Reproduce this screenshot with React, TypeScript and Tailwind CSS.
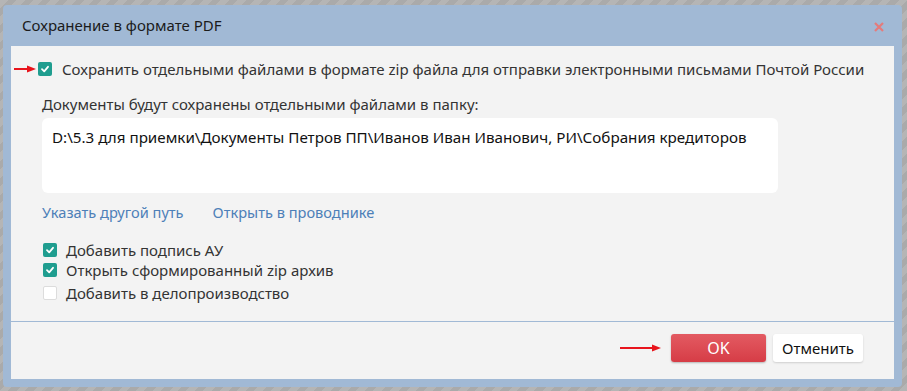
const font = { fontFamily: '"Noto Sans", "Open Sans", sans-serif' };

function Check({ checked }: { checked: boolean }) {
  return checked ? (
    <span className="flex h-[14px] w-[14px] shrink-0 items-center justify-center rounded-[2px] bg-[#1f9d8f]">
      <svg width="10" height="10" viewBox="0 0 10 10">
        <path d="M2 5.2 L4.2 7.3 L8 2.8" stroke="white" strokeWidth="1.8" fill="none" strokeLinecap="round" strokeLinejoin="round" />
      </svg>
    </span>
  ) : (
    <span className="h-[14px] w-[14px] shrink-0 rounded-[2px] border border-[#dcdcdc] bg-white" />
  );
}

function Arrow({ w }: { w: number }) {
  return (
    <svg width={w} height="8" viewBox={`0 0 ${w} 8`} className="shrink-0">
      <line x1="0" y1="4" x2={w - 7} y2="4" stroke="#e8141c" strokeWidth="2" />
      <path d={`M${w - 9} 0.5 L${w} 4 L${w - 9} 7.5 Z`} fill="#e8141c" />
    </svg>
  );
}

export default function App() {
  return (
    <div
      className="h-[391px] w-[907px] bg-[repeating-linear-gradient(135deg,#b5b5b5_0px,#b5b5b5_6px,#aaaaaa_6px,#aaaaaa_12px)] pl-[3px] pt-[5px]"
      style={font}
    >
      <div className="flex h-[382px] w-[899px] flex-col rounded-[4px] bg-[#a1b9d5] px-[8px] pb-[8px]">
        <div className="flex h-[41px] items-center justify-between pl-[11px] pr-[10px]">
          <span className="text-[15px] text-[#1b1b1b]">Сохранение в формате PDF</span>
          <svg width="10" height="10" viewBox="0 0 10 10" className="mt-[3px]">
            <path d="M1 1 L9 9 M9 1 L1 9" stroke="#e57b7b" strokeWidth="2.2" />
          </svg>
        </div>
        <div className="flex flex-1 flex-col bg-[#f3f3f3] text-[15px] leading-[20px] text-[#333333]">
          <div className="flex flex-col pl-[3px] pt-[13px]">
            <div className="flex items-center">
              <Arrow w={22} />
              <span className="ml-[2px]"><Check checked /></span>
              <span className="ml-[10px]">
                Сохранить отдельными файлами в формате zip файла для отправки электронными письмами Почтой России
              </span>
            </div>
          </div>
          <div className="flex flex-col px-[31px]">
            <div className="mt-[15px]">Документы будут сохранены отдельными файлами в папку:</div>
            <div className="mt-[4px] h-[75px] w-[736px] rounded-[6px] bg-white px-[10px] pt-[9px] text-[15.2px] text-[#111111]">
              D:\5.3 для приемки\Документы Петров ПП\Иванов Иван Иванович, РИ\Собрания кредиторов
            </div>
            <div className="mt-[9px] flex gap-[29px] text-[14.6px] text-[#4d80b8]">
              <span>Указать другой путь</span>
              <span>Открыть в проводнике</span>
            </div>
            <div className="mt-[18px] flex flex-col pl-[1px]">
              <label className="flex h-[20px] items-center gap-[9px]">
                <Check checked />
                <span>Добавить подпись АУ</span>
              </label>
              <label className="flex h-[20px] items-center gap-[9px]">
                <Check checked />
                <span>Открыть сформированный zip архив</span>
              </label>
              <label className="mt-[3px] flex h-[20px] items-center gap-[9px]">
                <Check checked={false} />
                <span>Добавить в делопроизводство</span>
              </label>
            </div>
          </div>
          <div className="mt-[18px] border-t border-[#a1b9d5]" />
          <div className="flex items-center justify-end gap-[7px] pr-[31px] pt-[12px]">
            <Arrow w={41} />
            <button className="ml-[3px] h-[28px] w-[95px] rounded-[3px] bg-gradient-to-b from-[#e35a62] to-[#d63c46] text-[16px] text-white shadow-[0_1px_2px_rgba(0,0,0,0.25)]">
              OK
            </button>
            <button className="h-[28px] w-[90px] rounded-[3px] bg-white text-[15px] text-[#111111] shadow-[0_1px_2px_rgba(0,0,0,0.15)]">
              Отменить
            </button>
          </div>
        </div>
      </div>
    </div>
  );
}
